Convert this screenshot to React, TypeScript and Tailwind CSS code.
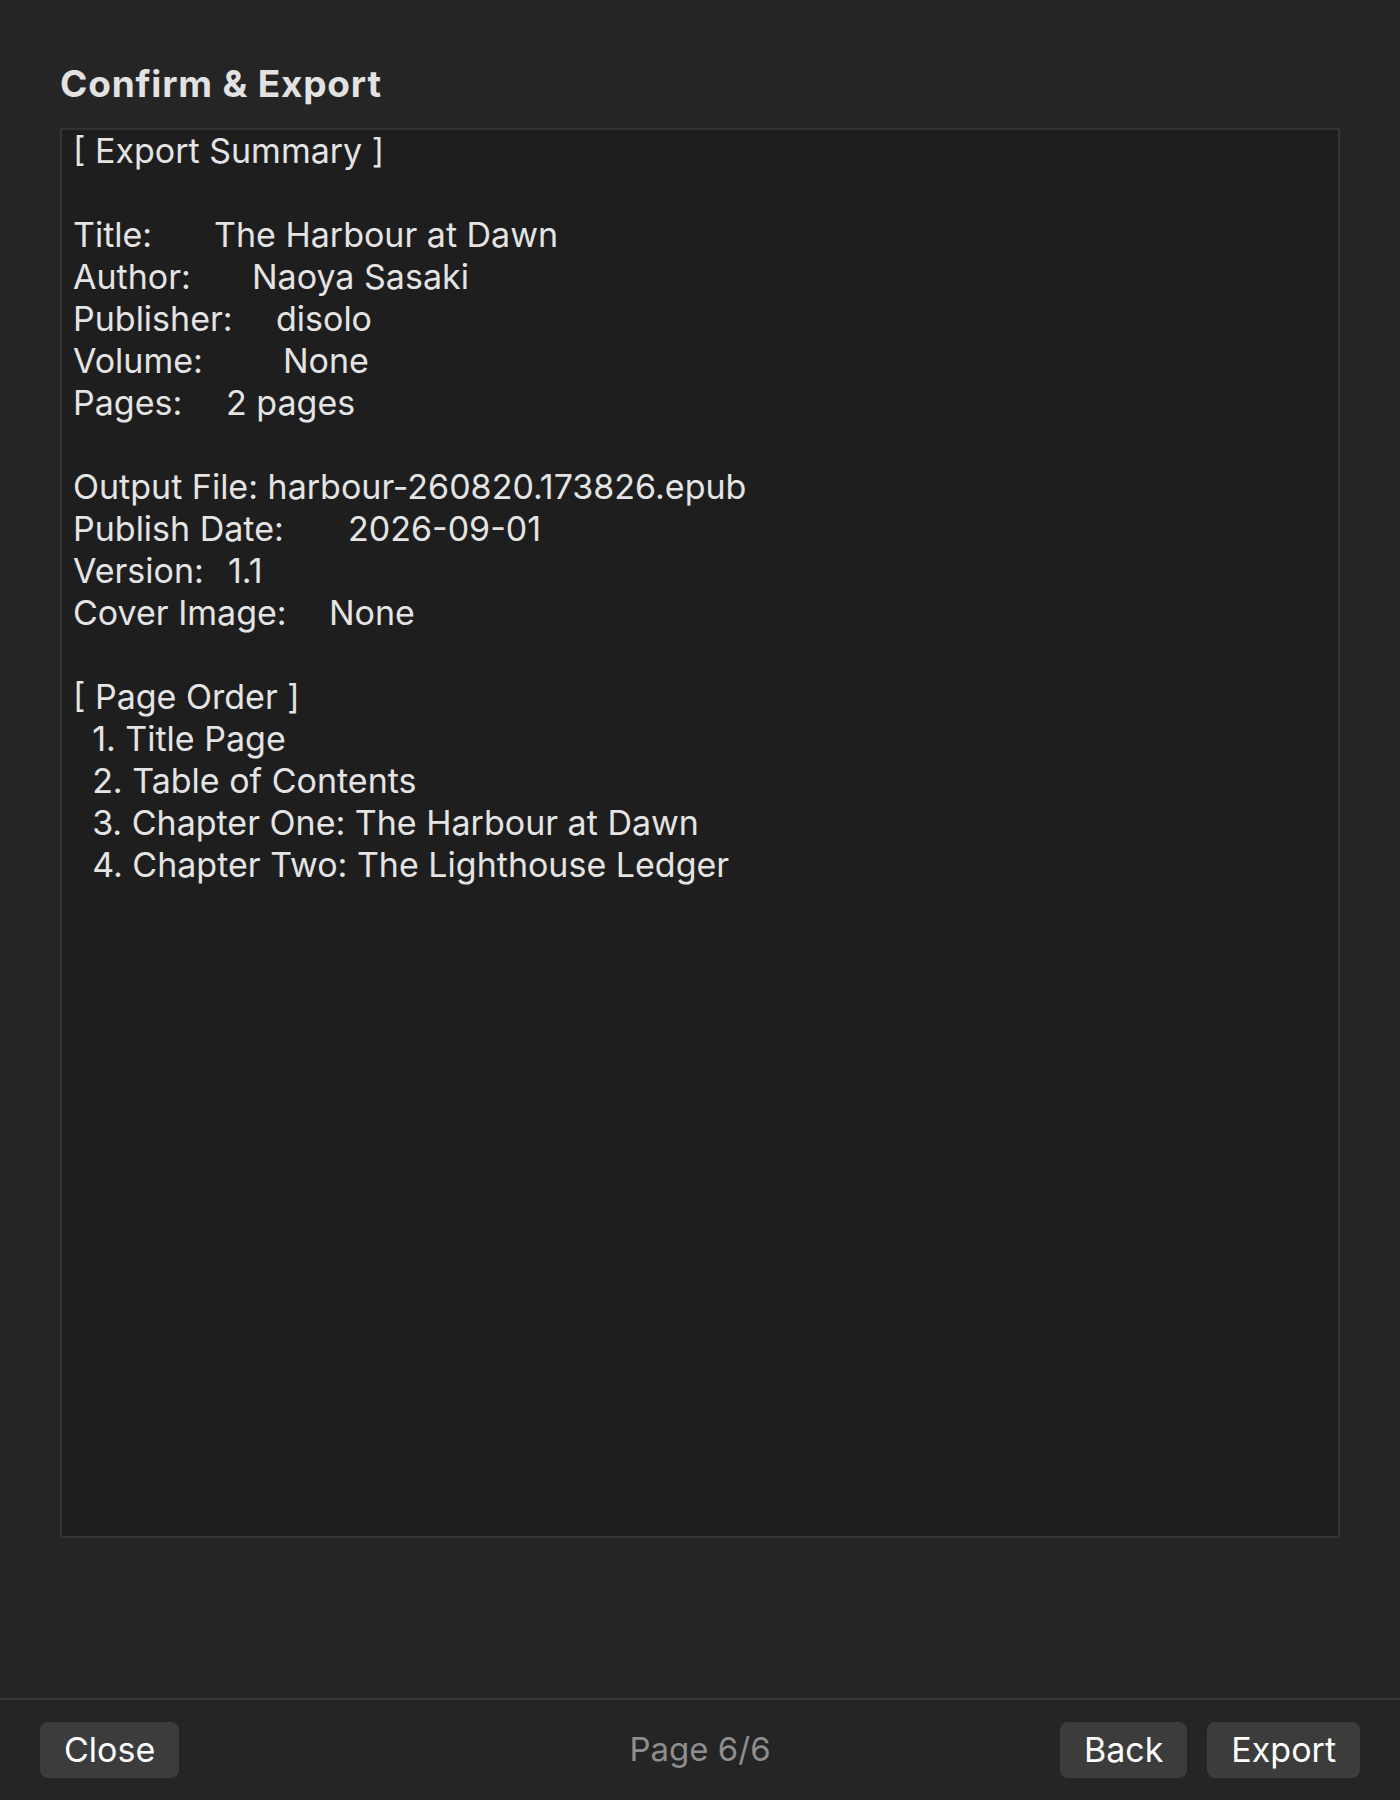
import React from 'react';

// 요약 필드 (label 폭은 값이 시작하는 위치에 맞춤)
const fields: { label: string; value: string; w: string }[] = [
  { label: 'Title:', value: 'The Harbour at Dawn', w: 'w-[141px]' },
  { label: 'Author:', value: 'Naoya Sasaki', w: 'w-[179px]' },
  { label: 'Publisher:', value: 'disolo', w: 'w-[203px]' },
  { label: 'Volume:', value: 'None', w: 'w-[210px]' },
  { label: 'Pages:', value: '2 pages', w: 'w-[153px]' },
];

const fileFields: { label: string; value: string; w: string }[] = [
  { label: 'Publish Date:', value: '2026-09-01', w: 'w-[275px]' },
  { label: 'Version:', value: '1.1', w: 'w-[155px]' },
  { label: 'Cover Image:', value: 'None', w: 'w-[256px]' },
];

const pageOrder = [
  'Title Page',
  'Table of Contents',
  'Chapter One: The Harbour at Dawn',
  'Chapter Two: The Lighthouse Ledger',
];

function Row({ label, value, w }: { label: string; value: string; w: string }) {
  return (
    <div className="h-[42px] whitespace-pre">
      <span className={`inline-block ${w}`}>{label}</span>
      {value}
    </div>
  );
}

function FooterButton({ children }: { children: React.ReactNode }) {
  return (
    <button
      type="button"
      className="h-[56px] rounded-lg bg-[#3c3c3c] px-6 text-[34px] leading-none text-white"
    >
      {children}
    </button>
  );
}

export default function App() {
  return (
    <div className="flex h-[1800px] flex-col bg-[#252525] font-['Inter','Liberation_Sans',sans-serif]">
      <main className="flex-1 px-[60px] pt-[62px]">
        <h1 className="text-[37px] font-bold leading-[44px] tracking-[0.8px] text-[#e2e2e2]">
          Confirm &amp; Export
        </h1>

        <div className="mt-[22px] h-[1410px] border-2 border-[#333333] bg-[#1e1e1e] pl-[11px] text-[34px] leading-[42px] text-[#e4e4e4]">
          <div className="h-[42px]">[ Export Summary ]</div>
          <div className="h-[42px]" />
          {fields.map((f) => (
            <Row key={f.label} {...f} />
          ))}
          <div className="h-[42px]" />
          <div className="h-[42px]">Output File: harbour-260820.173826.epub</div>
          {fileFields.map((f) => (
            <Row key={f.label} {...f} />
          ))}
          <div className="h-[42px]" />
          <div className="h-[42px]">[ Page Order ]</div>
          {pageOrder.map((p, i) => (
            <div key={p} className="h-[42px] whitespace-pre">
              {`  ${i + 1}. ${p}`}
            </div>
          ))}
        </div>
      </main>

      <footer className="grid h-[102px] grid-cols-3 items-center border-t-2 border-[#383838] px-[40px]">
        <div className="flex">
          <FooterButton>Close</FooterButton>
        </div>
        <span className="justify-self-center text-[33px] text-[#8e8e8e]">Page 6/6</span>
        <div className="flex justify-end gap-5">
          <FooterButton>Back</FooterButton>
          <FooterButton>Export</FooterButton>
        </div>
      </footer>
    </div>
  );
}
